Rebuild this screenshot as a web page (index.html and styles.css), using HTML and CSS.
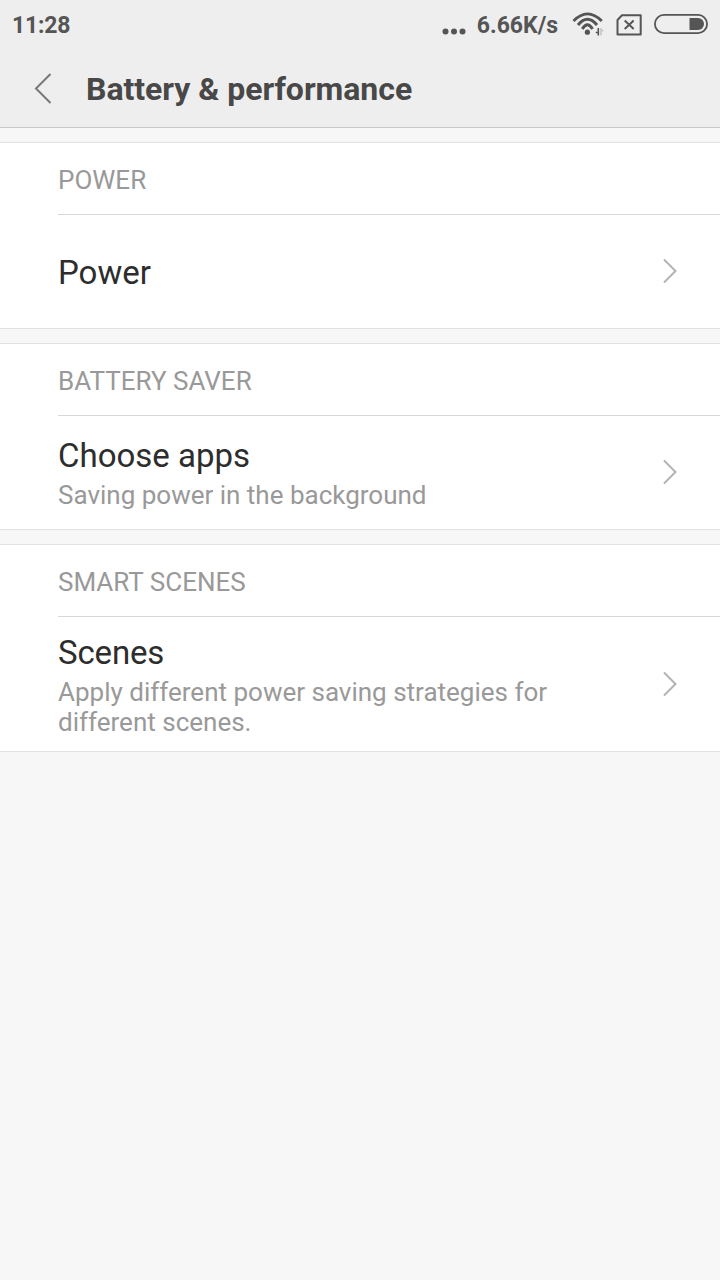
FILE: index.html
```html
<!DOCTYPE html>
<html lang="en">
<head>
<meta charset="utf-8">
<title>Battery &amp; performance</title>
<link rel="stylesheet" href="styles.css">
</head>
<body>
<header class="header">
  <div class="status">
    <span class="clock">11:28</span>
    <div class="indicators">
      <svg class="dots" width="24" height="8" viewBox="0 0 24 8"><circle cx="3.500" cy="4.500" r="3"/><circle cx="12" cy="4.500" r="3"/><circle cx="20.500" cy="4.500" r="3"/></svg>
      <span class="speed">6.66K/s</span>
      <svg class="wifi" width="33" height="26" viewBox="0 0 33 26"><g fill="none" stroke="#555" stroke-width="2.900"><path d="M2.500 9Q16.400-5.200 30.800 9"/><path d="M7 13Q16.400 1.400 26 13"/><path d="M11.300 17Q16.400 8.600 21.500 17"/></g><circle cx="16.400" cy="20.200" r="2.600" fill="#555"/><path d="M27.300 16v7.500M24.800 20.500h2.500" fill="none" stroke="#555" stroke-width="1.600"/><path d="M30 16v7.500M30 18.500h2.500" fill="none" stroke="#c2c2c2" stroke-width="1.500"/></svg>
      <svg class="sim" width="26" height="22" viewBox="0 0 26 22"><path d="M6 1.300H24.700V20.500H1.500V6Z" fill="none" stroke="#555" stroke-width="2" stroke-linejoin="round"/><path d="M8.700 6.500L17.700 15M17.700 6.500L8.700 15" fill="none" stroke="#555" stroke-width="2"/></svg>
      <svg class="battery" width="54" height="20" viewBox="0 0 54 20"><rect x=".9" y=".9" width="52.200" height="18.200" rx="9.100" fill="none" stroke="#555" stroke-width="1.800"/><path d="M35.500 4H44a6 6 0 0 1 0 12H35.500Z" fill="#555"/></svg>
    </div>
  </div>
  <div class="titlebar">
    <svg class="back" width="18" height="32" viewBox="0 0 18 32"><path d="M16.500 2L2 16.500L16.500 31"/></svg>
    <h1 class="title">Battery &amp; performance</h1>
  </div>
</header>
<main class="settings">
  <section class="group">
    <h2 class="group-title">POWER</h2>
    <div class="row row-single">
      <div class="copy"><div class="name">Power</div></div>
      <svg class="chevron" width="16" height="26" viewBox="0 0 16 26"><path d="M2 1.500L13.500 13L2 24.500"/></svg>
    </div>
  </section>
  <section class="group">
    <h2 class="group-title">BATTERY SAVER</h2>
    <div class="row">
      <div class="copy"><div class="name">Choose apps</div><div class="summary">Saving power in the background</div></div>
      <svg class="chevron" width="16" height="26" viewBox="0 0 16 26"><path d="M2 1.500L13.500 13L2 24.500"/></svg>
    </div>
  </section>
  <section class="group">
    <h2 class="group-title">SMART SCENES</h2>
    <div class="row row-tall">
      <div class="copy"><div class="name">Scenes</div><div class="summary">Apply different power saving strategies for different scenes.</div></div>
      <svg class="chevron" width="16" height="26" viewBox="0 0 16 26"><path d="M2 1.500L13.500 13L2 24.500"/></svg>
    </div>
  </section>
</main>
</body>
</html>
```
FILE: styles.css
```css
* { box-sizing: border-box; }
body { margin: 0; min-height: 1280px; background: #f7f7f7; font-family: Roboto, sans-serif; }
svg { display: block; flex: none; }
.header { height: 128px; background: #eee; border-bottom: 1px solid #c8c8c8; }
.status { height: 50px; padding: 0 12px; display: flex; justify-content: space-between; align-items: center; color: #555; font-size: 23px; font-weight: 700; }
.clock { letter-spacing: -.2px; }
.indicators { display: flex; align-items: center; height: 50px; }
.dots { fill: #555; margin: 12px 11px 0 0; }
.speed { margin-right: 13px; }
.wifi { margin-right: 12px; }
.sim { margin: -1px 12px 0 0; }
.battery { margin-top: -2px; }
.titlebar { height: 76px; display: flex; align-items: center; padding-left: 34px; }
.back { fill: none; stroke: #777; stroke-width: 2; }
.title { margin: 1px 0 0 34px; font-size: 32px; line-height: 38px; color: #484848; letter-spacing: -.03px; }
.settings { padding-top: 14px; display: flex; flex-direction: column; gap: 14px; }
.group { background: #fff; border-top: 1px solid #e2e2e2; border-bottom: 1px solid #e2e2e2; padding-left: 58px; }
.group-title { margin: 0; height: 72px; border-bottom: 1px solid #d8d8d8; font-size: 26px; font-weight: 400; line-height: 74px; color: #999; }
.row { height: 113px; padding: 0 42px 2px 0; display: flex; align-items: center; justify-content: space-between; }
.row-tall { height: 134px; padding-bottom: 0; }
.copy { width: 510px; padding-top: 1px; }
.row-single .copy { padding-top: 5px; }
.name { font-size: 33px; line-height: 42px; color: #2d2d2d; }
.row-tall .name { letter-spacing: -.15px; }
.summary { margin-top: 3px; font-size: 26px; line-height: 30px; color: #999; }
.chevron { fill: none; stroke: #b3b3b3; stroke-width: 2; }
```
